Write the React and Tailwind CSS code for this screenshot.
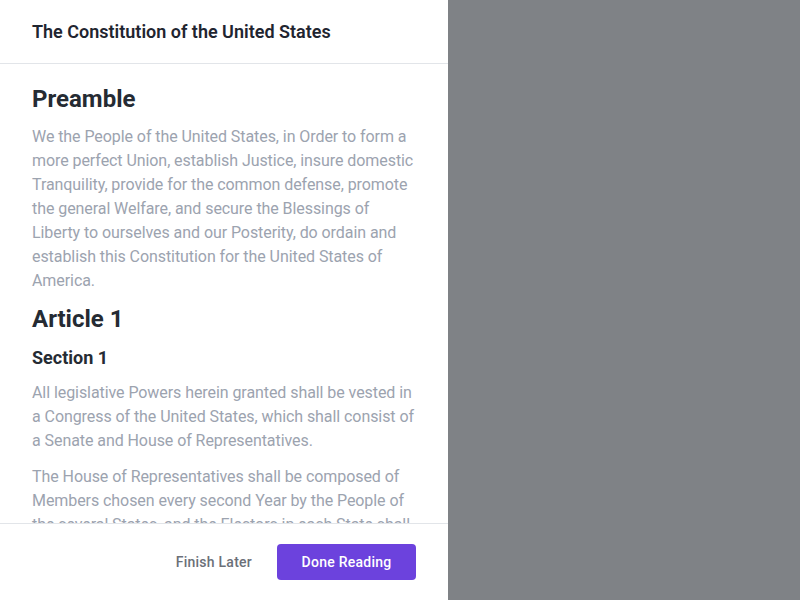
export default function App() {
  return (
    <div className="flex h-screen w-full overflow-hidden bg-[#7f8286]" style={{ fontFamily: "Roboto, 'Liberation Sans', sans-serif" }}>
      <div className="flex h-full w-[448px] flex-col bg-white">
        <div className="flex h-16 shrink-0 items-center border-b border-[#e2e5e9] px-8">
          <h1 className="text-lg font-semibold text-[#1f2530]">The Constitution of the United States</h1>
        </div>
        <div className="min-h-0 flex-1 overflow-hidden px-8 pt-[19px]">
          <h2 className="text-2xl leading-8 font-bold text-[#252b33]">Preamble</h2>
          <p className="mt-[10px] text-base leading-6 tracking-[-0.07px] text-[#9ca3af]">
            We the People of the United States, in Order to form a more perfect Union, establish Justice, insure domestic Tranquility, provide for the common defense, promote the general Welfare, and secure the Blessings of Liberty to ourselves and our Posterity, do ordain and establish this Constitution for the United States of America.
          </p>
          <h2 className="mt-[10px] text-2xl leading-8 font-bold text-[#252b33]">Article 1</h2>
          <h3 className="mt-[9px] text-lg leading-7 font-bold text-[#252b33]">Section 1</h3>
          <p className="mt-[9px] text-base leading-6 tracking-[-0.07px] text-[#9ca3af]">
            All legislative Powers herein granted shall be vested in a Congress of the United States, which shall consist of a Senate and House of Representatives.
          </p>
          <p className="mt-3 text-base leading-6 tracking-[-0.07px] text-[#9ca3af]">
            The House of Representatives shall be composed of Members chosen every second Year by the People of the several States, and the Electors in each State shall have the Qualifications requisite for Electors of the most numerous Branch of the State Legislature.
          </p>
        </div>
        <div className="flex h-[77px] shrink-0 items-center justify-end border-t border-[#e2e5e9] px-8">
          <button className="mr-[25px] text-sm font-medium tracking-[0.25px] text-[#6b7078]">Finish Later</button>
          <button className="flex h-9 w-[139px] items-center justify-center rounded bg-[#6c42dd] text-sm font-medium tracking-[0.25px] text-white">Done Reading</button>
        </div>
      </div>
      <div className="flex-1" />
    </div>
  );
}
